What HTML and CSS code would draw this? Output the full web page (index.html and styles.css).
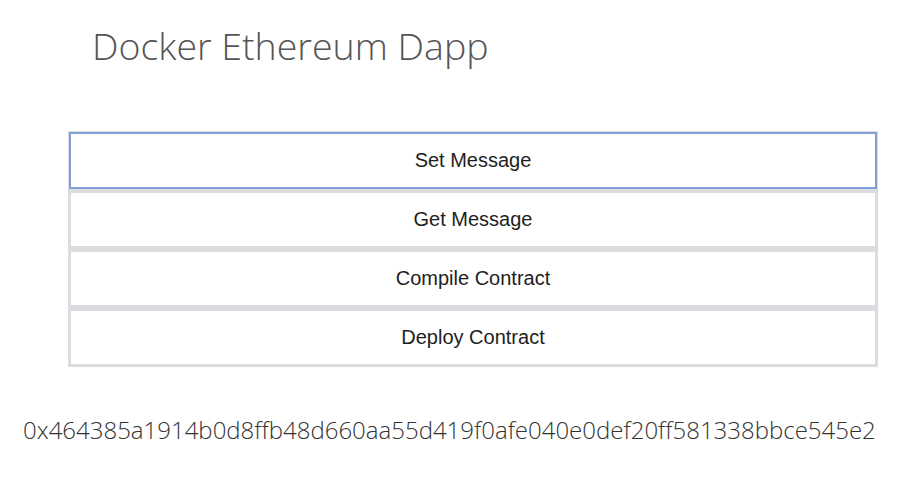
FILE: index.html
```html
<!DOCTYPE html>
<html>
<head>
<meta charset="utf-8">
<link rel="stylesheet" href="styles.css">
</head>
<body>
<div class="page">
  <h1 class="title">Docker Ethereum Dapp</h1>
  <div class="actions">
    <button class="btn btn-focus">Set Message</button>
    <button class="btn">Get Message</button>
    <button class="btn">Compile Contract</button>
    <button class="btn">Deploy Contract</button>
  </div>
  <p class="hash">0x464385a1914b0d8ffb48d660aa55d419f0afe040e0def20ff581338bbce545e2</p>
</div>
</body>
</html>
```
FILE: styles.css
```css
html, body {
  margin: 0;
  padding: 0;
  background: #ffffff;
}
.page {
  display: flex;
  flex-direction: column;
}
.title {
  margin: 24px 0 0 92px;
  font-family: "Open Sans", sans-serif;
  font-weight: 300;
  font-size: 37.5px;
  line-height: 44px;
  color: #555555;
}
.actions {
  display: flex;
  flex-direction: column;
  margin: 63px 40px 0 68px;
}
.btn {
  height: 59px;
  border: 3px solid #dcdce0;
  background: #ffffff;
  font-family: "Liberation Sans", Arial, sans-serif;
  font-size: 20px;
  color: #1e1e1e;
  padding: 0;
}
.btn-focus {
  outline: 2px solid #7f9fdb;
  outline-offset: -3px;
}
.hash {
  margin: 47px 0 0 23px;
  font-family: "Open Sans", sans-serif;
  font-weight: 300;
  font-size: 24px;
  line-height: 32px;
  color: #333333;
}
```
